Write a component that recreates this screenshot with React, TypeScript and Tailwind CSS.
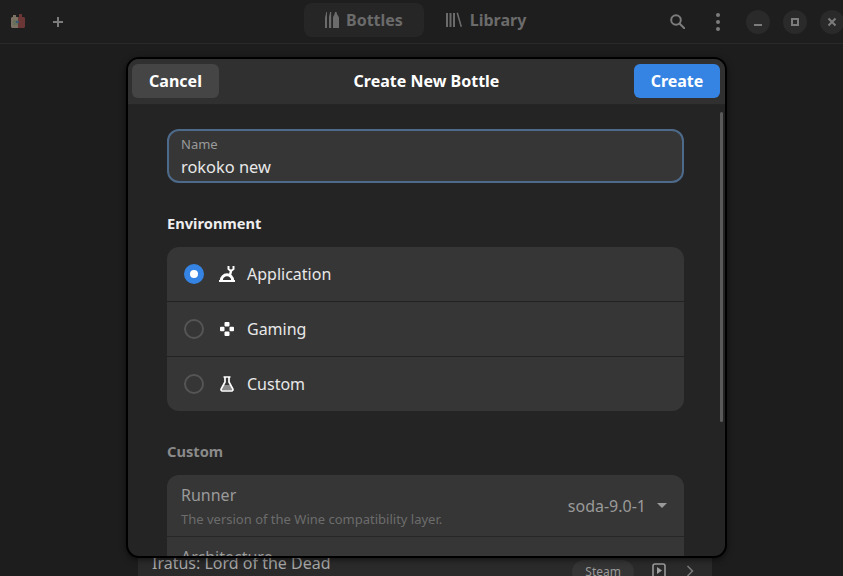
const font = { fontFamily: '"Noto Sans", sans-serif' };

function AppLogo() {
  return (
    <svg className="ml-[11px] mt-[-1px]" width="14" height="14" viewBox="0 0 14 14">
      <path d="M0 4l1-1h1V1h3v2h2v11H1l-1-1z" fill="#7b7264" />
      <path d="M7 3h1V0h3v3h2l1 1v9l-1 1H7z" fill="#6b3636" />
      <rect x="2" y="6" width="5" height="5" fill="#66705a" />
      <rect x="5" y="7" width="3" height="2" fill="#3f5670" />
    </svg>
  );
}

function BottlesIcon() {
  return (
    <svg width="14" height="16" viewBox="0 0 14 16" fill="#6b6b6b">
      <path d="M0 16V6c0-1.500 .9-2.500 1.200-6h.8v16zM4 16V5c0-1.500 .8-2.500 1-5h1.200v16zM8 16V6c0-2 1.500-2.500 2-6h1.500c.5 3.500 2.500 4 2.500 6v10z" />
    </svg>
  );
}

function LibraryIcon() {
  return (
    <svg width="16" height="16" viewBox="0 0 16 16" fill="#6b6b6b">
      <path d="M0 1h2v14H0zM3.500 1h2v14h-2zM7 1h2v14H7zM10.500 1l1.500-.5L16 14.500l-1.500 .5z" />
    </svg>
  );
}

function SearchIcon() {
  return (
    <svg width="15" height="15" viewBox="0 0 15 15" fill="none" stroke="#7c7c7c" strokeWidth="2">
      <circle cx="6" cy="6" r="4.800" />
      <path d="M9.500 9.500l4.800 4.800" strokeLinecap="round" />
    </svg>
  );
}

function WindowButton({ children }: { children: React.ReactNode }) {
  return <div className="w-6 h-6 rounded-full bg-[#2a2a2a] flex items-center justify-center">{children}</div>;
}

function Radio({ checked }: { checked?: boolean }) {
  if (checked) {
    return (
      <div className="w-5 h-5 rounded-full bg-[#3584e4] flex items-center justify-center">
        <div className="w-2 h-2 rounded-full bg-white" />
      </div>
    );
  }
  return <div className="w-5 h-5 rounded-full border-2 border-[#555555]" />;
}

function AppIcon() {
  return (
    <svg width="16" height="16" viewBox="0 0 16 16" fill="none">
      <path d="M0 14h16v2H0z" fill="white" />
      <path d="M2.300 14.500a5.700 5.700 0 0 1 11.400 0" stroke="white" strokeWidth="3" />
      <path d="M9.500 0v3l2.500 2 2.500-2V0" stroke="white" strokeWidth="2" />
      <path d="M12 5l-1 4" stroke="white" strokeWidth="2.500" />
    </svg>
  );
}

function GamingIcon() {
  return (
    <svg width="16" height="16" viewBox="0 0 16 16" fill="white">
      <rect x="5.500" y="1" width="5" height="4.500" rx="1" />
      <rect x="1" y="5.700" width="4.500" height="4.600" rx="1" />
      <rect x="10.500" y="5.700" width="4.500" height="4.600" rx="1" />
      <rect x="5.500" y="10.500" width="5" height="4.500" rx="1" />
    </svg>
  );
}

function FlaskIcon() {
  return (
    <svg width="16" height="16" viewBox="0 0 16 16" fill="none">
      <path d="M5 9h6l2.500 5.500h-11z" fill="#8a8a8a" />
      <path d="M4.500 1h7M6 1v5L2.200 13c-.5 1 .1 2 1.200 2h9.200c1.100 0 1.700-1 1.200-2L10 6V1" stroke="white" strokeWidth="1.700" strokeLinejoin="round" />
    </svg>
  );
}

function EnvRow({ label, icon, checked, last }: { label: string; icon: React.ReactNode; checked?: boolean; last?: boolean }) {
  return (
    <div className={`flex items-center pl-[17px] ${last ? 'h-[54px]' : 'h-[55px] border-b border-[#222222]'}`}>
      <Radio checked={checked} />
      <div className="ml-[15px] w-4 h-4 flex items-center justify-center">{icon}</div>
      <span className="ml-3 text-[16px] text-[#e8e8e8]">{label}</span>
    </div>
  );
}

export default function App() {
  return (
    <div className="relative w-[843px] h-[576px] overflow-hidden bg-[#1d1d1d]" style={font}>
      {/* Main window header */}
      <header className="h-[44px] border-b border-[#2a2a2a] bg-[#1e1e1e] flex items-center relative">
        <AppLogo />
        <svg className="ml-[27px]" width="12" height="12" viewBox="0 0 12 12" fill="#7c7c7c">
          <path d="M5 1h2v4h4v2H7v4H5V7H1V5h4z" />
        </svg>
        <nav className="absolute left-[304px] top-[3px] flex">
          <div className="w-[120px] h-[34px] rounded-lg bg-[#262626] flex items-center pl-[21px] gap-[7px]">
            <BottlesIcon />
            <span className="text-[16px] font-bold text-[#6b6b6b]">Bottles</span>
          </div>
          <div className="w-[124px] h-[34px] flex items-center justify-center gap-2">
            <LibraryIcon />
            <span className="text-[16px] font-bold text-[#6b6b6b]">Library</span>
          </div>
        </nav>
        <div className="ml-auto flex items-center mr-[-1px]">
          <SearchIcon />
          <div className="ml-[31px] flex flex-col gap-[3px]">
            <div className="w-[4px] h-[4px] rounded-full bg-[#7c7c7c]" />
            <div className="w-[4px] h-[4px] rounded-full bg-[#7c7c7c]" />
            <div className="w-[4px] h-[4px] rounded-full bg-[#7c7c7c]" />
          </div>
          <div className="ml-[26px] flex gap-[13px]">
            <WindowButton>
              <div className="w-2 h-[2px] mt-[6px] bg-[#7c7c7c]" />
            </WindowButton>
            <WindowButton>
              <div className="w-2 h-2 border-2 border-[#7c7c7c]" />
            </WindowButton>
            <WindowButton>
              <svg width="10" height="10" viewBox="0 0 10 10" stroke="#7c7c7c" strokeWidth="2">
                <path d="M1.500 1.500l7 7M8.500 1.500l-7 7" />
              </svg>
            </WindowButton>
          </div>
        </div>
      </header>

      {/* List row behind the dialog */}
      <div className="absolute left-[138px] top-[550px] w-[574px] h-[26px] bg-[#2a2a2a] flex items-end">
        <span className="ml-[14px] mb-[1px] text-[16px] text-[#a8a8a8]">Iratus: Lord of the Dead</span>
        <div className="ml-auto h-[24px] px-[13px] mb-[-8px] rounded-full bg-[#353535] text-[12px] text-[#9a9a9a] flex items-center">Steam</div>
        <svg className="ml-[18px] mb-[-1px]" width="14" height="14" viewBox="0 0 14 14" fill="none">
          <rect x="1" y="1" width="12" height="14" rx="2" stroke="#a0a0a0" strokeWidth="1.500" />
          <path d="M5 4l5 3.500-5 3.500z" fill="#a0a0a0" />
        </svg>
        <svg className="ml-[20px] mr-[18px] mb-[-1px]" width="8" height="12" viewBox="0 0 8 12" fill="none">
          <path d="M1.500 1l5 5-5 5" stroke="#7c7c7c" strokeWidth="1.500" />
        </svg>
      </div>

      {/* Dialog */}
      <div className="absolute left-[126px] top-[57px] w-[601px] h-[501px] rounded-[13px] border-2 border-black bg-[#242424] overflow-hidden shadow-[0_2px_6px_rgba(0,0,0,0.5)]">
        <div className="h-[46px] bg-[#303030] border-b border-[#262626] relative flex items-start justify-between pl-[4px] pr-[5px] pt-[5px]">
          <button className="w-[87px] h-[34px] rounded-md bg-[#454545] text-white text-[16px] font-bold">Cancel</button>
          <span className="h-[34px] flex items-center text-white text-[16px] font-bold">Create New Bottle</span>
          <button className="w-[86px] h-[34px] rounded-md bg-[#3584e4] text-white text-[16px] font-bold">Create</button>
        </div>

        {/* Scrollbar */}
        <div className="absolute left-[592px] top-[53px] w-[3px] h-[310px] rounded-full bg-[#5a5a5a]" />

        <div className="pl-[39px] pr-[41px] pt-[24px]">
          <div className="h-[54px] rounded-xl border-2 border-[#4d6a8a] bg-[#363636] pl-[12px] pt-[4px]">
            <div className="text-[13px] leading-[18px] text-[#9a9a9a]">Name</div>
            <div className="mt-[2px] text-[16.4px] leading-[24px] text-[#e8e8e8]">rokoko new</div>
          </div>

          <h2 className="mt-[28px] text-[14.67px] leading-[24px] font-bold text-[#eeeeee]">Environment</h2>
          <div className="mt-[12px] rounded-xl bg-[#363636] overflow-hidden">
            <EnvRow label="Application" icon={<AppIcon />} checked />
            <EnvRow label="Gaming" icon={<GamingIcon />} />
            <EnvRow label="Custom" icon={<FlaskIcon />} last />
          </div>

          <h2 className="mt-[28px] text-[14.67px] leading-[24px] font-bold text-[#8a8a8a]">Custom</h2>
          <div className="mt-[12px] rounded-t-xl bg-[#363636] overflow-hidden">
            <div className="h-[62px] border-b border-[#262626] pl-[14px] pr-[17px] flex items-center justify-between">
              <div>
                <div className="text-[16px] leading-[22px] text-[#9a9a9a]">Runner</div>
                <div className="text-[13px] leading-[18px] mt-[4px] text-[#6c6c6c]">The version of the Wine compatibility layer.</div>
              </div>
              <div className="flex items-center gap-[11px]">
                <span className="text-[16px] text-[#9a9a9a]">soda-9.0-1</span>
                <div className="w-0 h-0 border-x-[5px] border-x-transparent border-t-[5px] border-t-[#9a9a9a]" />
              </div>
            </div>
            <div className="pl-[14px] pt-[9px] text-[16px] leading-[22px] text-[#9a9a9a]">Architecture</div>
          </div>
        </div>
      </div>
    </div>
  );
}
